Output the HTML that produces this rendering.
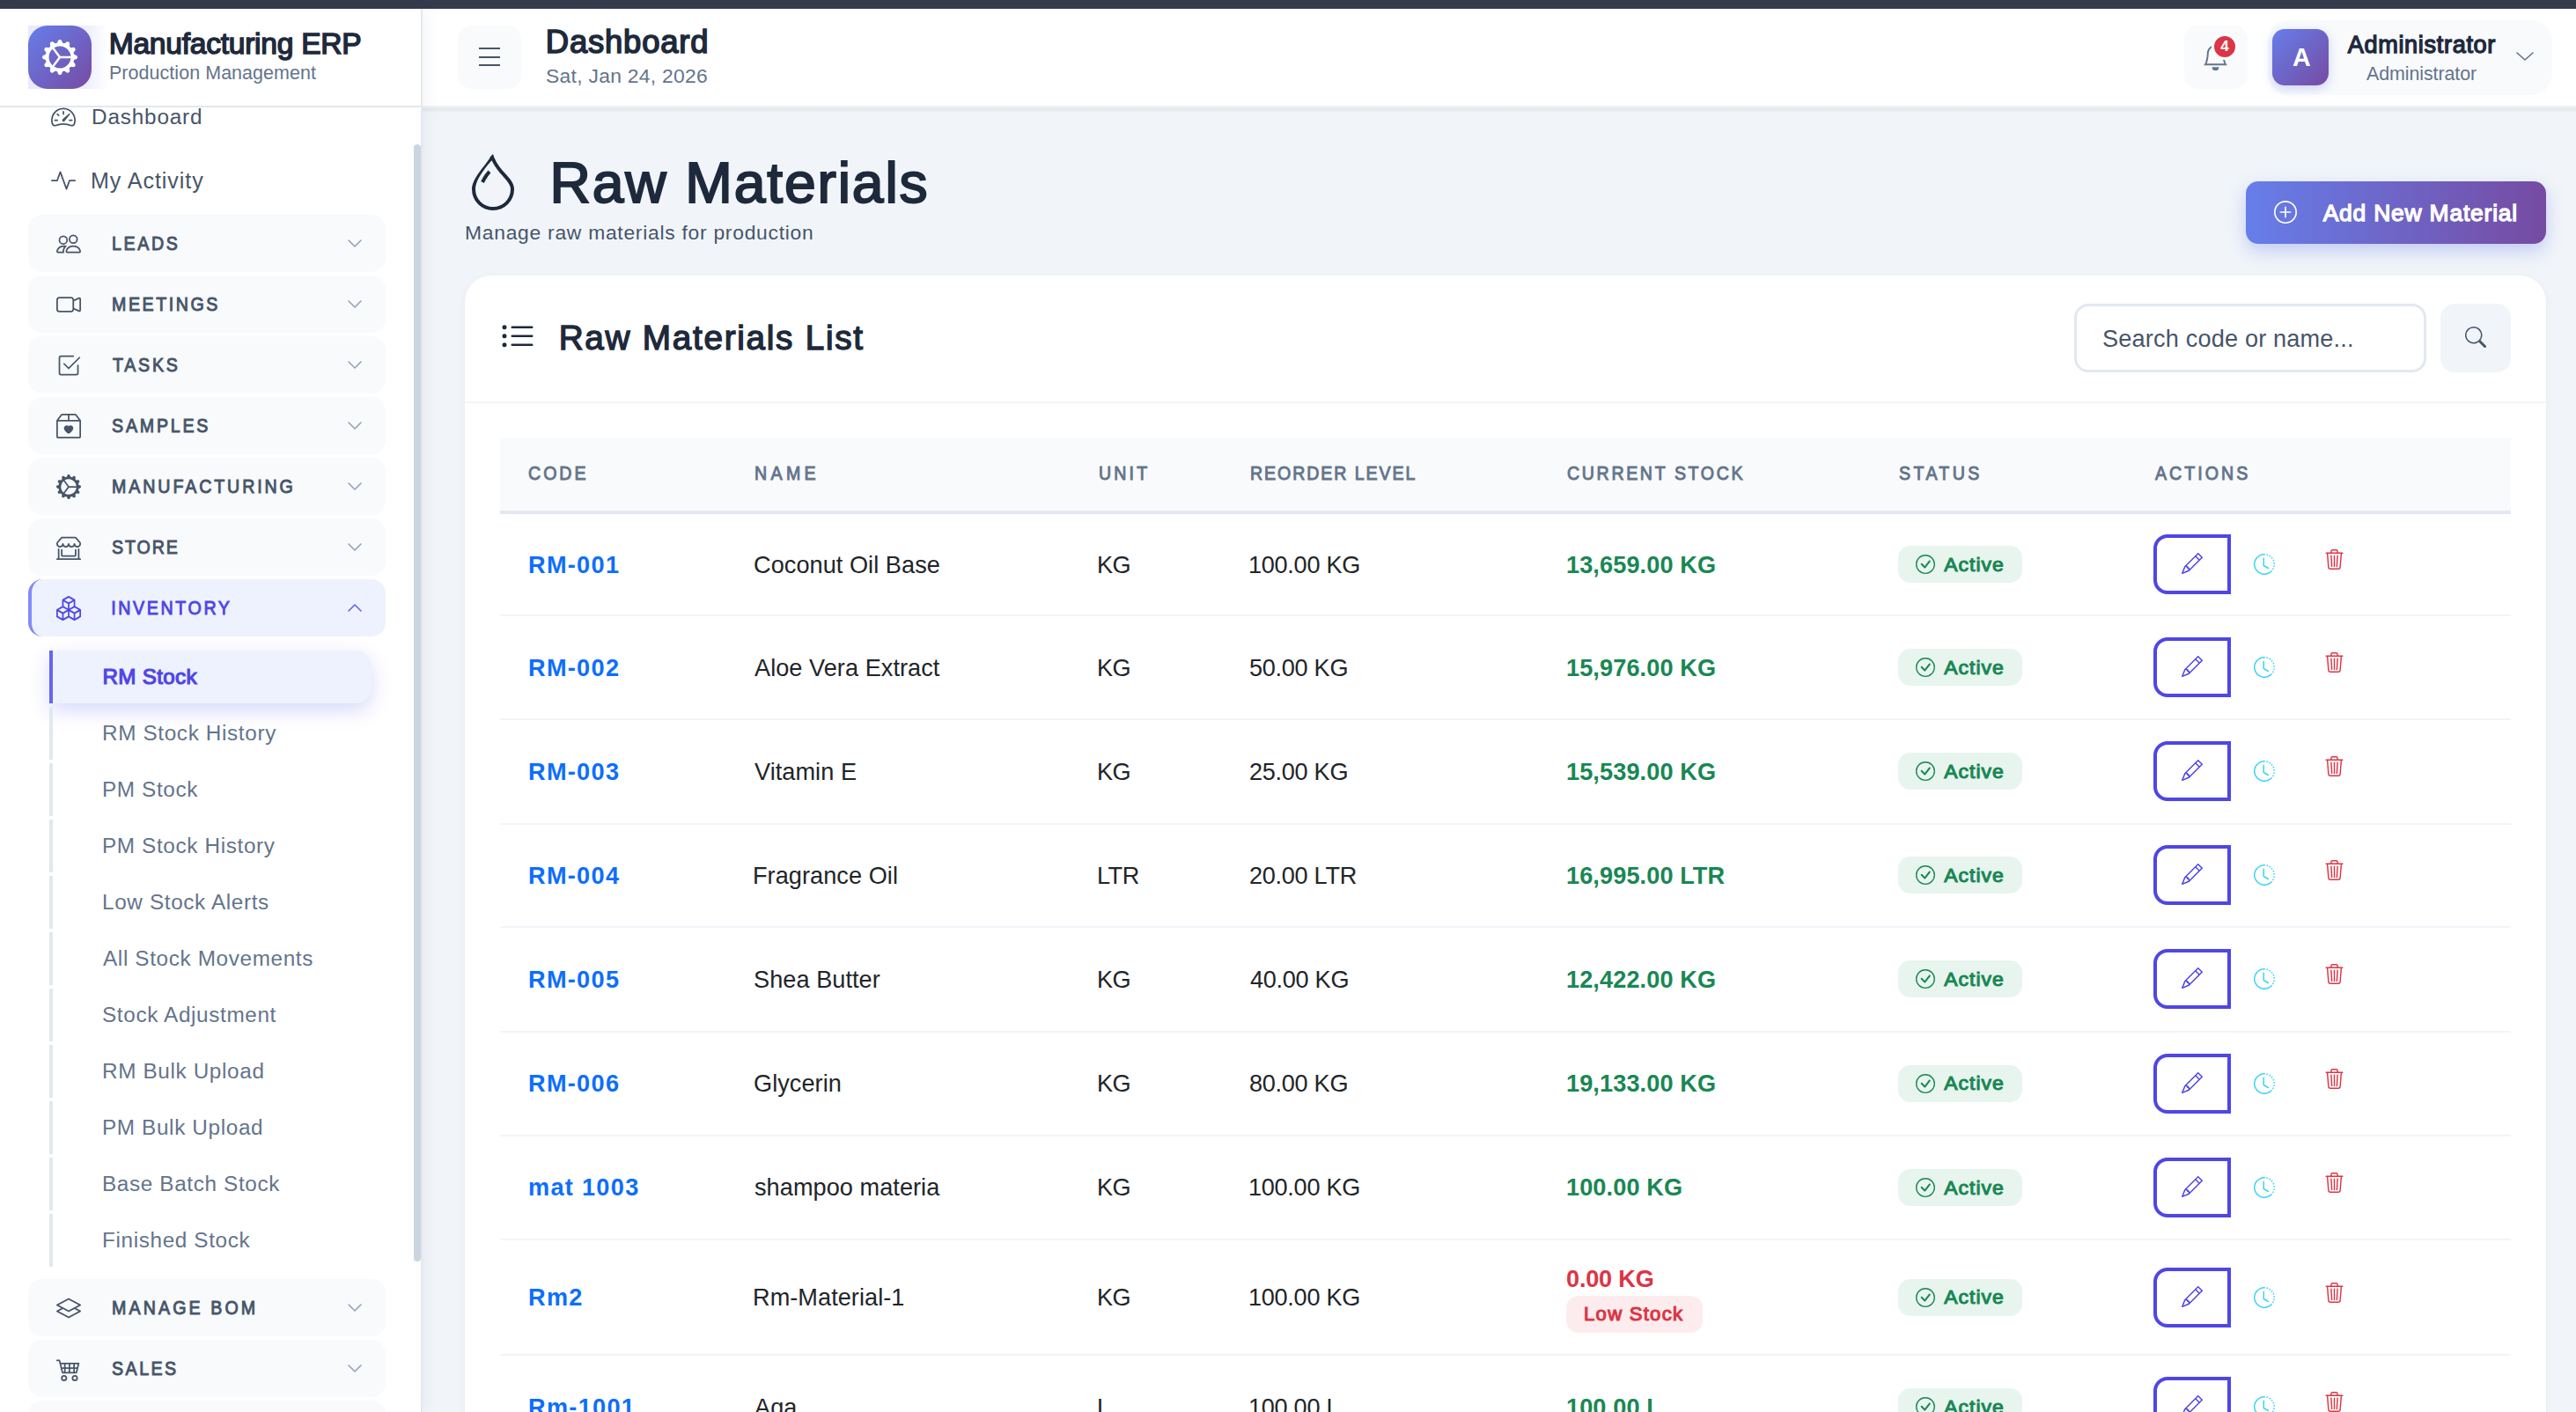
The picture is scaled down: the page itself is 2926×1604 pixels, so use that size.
<!DOCTYPE html>
<html><head><meta charset="utf-8"><title>Raw Materials</title>
<style>
html,body{margin:0;padding:0;width:2926px;height:1604px;overflow:hidden;background:#f1f5f9;font-family:"Liberation Sans",sans-serif}
.t{position:absolute;white-space:nowrap}
svg{display:block}
</style></head><body>
<div style="position:absolute;left:0;top:0;width:2926px;height:10px;background:#343b4d"></div>
<div style="position:absolute;left:480px;top:121px;width:2446px;height:1483px;background:#f1f5f9"></div>
<div style="position:absolute;left:480px;top:120px;width:2446px;height:9px;background:linear-gradient(#f1f5f9 0px,#eef1f5 2px,#e6eaf0 3px,#e6eaf0 5px,#eef1f5 7px,#f1f5f9 9px)"></div>
<div style="position:absolute;left:480px;top:10px;width:2446px;height:110px;background:#fff"></div>
<div style="position:absolute;left:0;top:10px;width:478px;height:1594px;background:#fff;border-right:2px solid #e2e8f0;box-shadow:3px 0 18px rgba(15,23,42,0.05)"></div>
<div style="position:absolute;left:0;top:120px;width:478px;height:2px;background:#e2e8f0"></div>
<div style="position:absolute;left:32px;top:29px;width:90px;height:72px;background:linear-gradient(90deg,rgba(120,130,235,0.16) 0%,rgba(120,130,235,0.13) 75%,rgba(120,130,235,0) 100%)"></div>
<div style="position:absolute;left:32px;top:29px;width:72px;height:72px;border-radius:22px;background:linear-gradient(135deg,#667eea 0%,#764ba2 100%)"></div>
<svg style="position:absolute;left:48px;top:45px;width:40px;height:40px;" viewBox="0 0 16 16" fill="#fff"><path d="M7.068.727c.243-.97 1.62-.97 1.864 0l.071.286a.96.96 0 0 0 1.622.434l.205-.211c.695-.719 1.888-.03 1.613.931l-.08.284a.96.96 0 0 0 1.187 1.187l.283-.081c.96-.275 1.65.918.931 1.613l-.211.205a.96.96 0 0 0 .434 1.622l.286.071c.97.243.97 1.62 0 1.864l-.286.071a.96.96 0 0 0-.434 1.622l.211.205c.719.695.03 1.888-.931 1.613l-.284-.08a.96.96 0 0 0-1.187 1.187l.081.283c.275.96-.918 1.65-1.613.931l-.205-.211a.96.96 0 0 0-1.622.434l-.071.286c-.243.97-1.62.97-1.864 0l-.071-.286a.96.96 0 0 0-1.622-.434l-.205.211c-.695.719-1.888.03-1.613-.931l.08-.284a.96.96 0 0 0-1.186-1.187l-.284.081c-.96.275-1.65-.918-.931-1.613l.211-.205a.96.96 0 0 0-.434-1.622l-.286-.071c-.97-.243-.97-1.62 0-1.864l.286-.071a.96.96 0 0 0 .434-1.622l-.211-.205c-.719-.695-.03-1.888.931-1.613l.284.08a.96.96 0 0 0 1.187-1.186l-.081-.284c-.275-.96.918-1.65 1.613-.931l.205.211a.96.96 0 0 0 1.622-.434zM12.973 8.5H8.25l-2.834 3.779A4.998 4.998 0 0 0 12.973 8.5m0-1a4.998 4.998 0 0 0-7.557-3.779l2.834 3.78zM5.048 3.967l-.087.065zm-.431.355A4.98 4.98 0 0 0 3.002 8c0 1.455.622 2.765 1.615 3.678L7.375 8zm.344 7.646.087.065z"/></svg>
<div class="t" style="left:123.75px;top:32.58px;font-size:33.57px;line-height:33.57px;letter-spacing:-0.258px;color:#1e293b;font-weight:400;-webkit-text-stroke:1.5px #1e293b;">Manufacturing ERP</div>
<div class="t" style="left:124.00px;top:72.86px;font-size:21.43px;line-height:21.43px;letter-spacing:0.077px;color:#64748b;font-weight:400;">Production Management</div>
<svg style="position:absolute;left:58px;top:119px;width:28px;height:28px;" viewBox="0 0 16 16" fill="#475569"><path d="M8 4a.5.5 0 0 1 .5.5V6a.5.5 0 0 1-1 0V4.5A.5.5 0 0 1 8 4M3.732 5.732a.5.5 0 0 1 .707 0l.915.914a.5.5 0 1 1-.708.708l-.914-.915a.5.5 0 0 1 0-.707M2 10a.5.5 0 0 1 .5-.5h1.586a.5.5 0 0 1 0 1H2.5A.5.5 0 0 1 2 10m9.5 0a.5.5 0 0 1 .5-.5h1.5a.5.5 0 0 1 0 1H12a.5.5 0 0 1-.5-.5m.754-4.246a.39.39 0 0 0-.527-.02L7.547 9.31a.91.91 0 1 0 1.302 1.258l3.434-4.297a.39.39 0 0 0-.029-.518z"/><path fill-rule="evenodd" d="M0 10a8 8 0 1 1 15.547 2.661c-.442 1.253-1.845 1.602-2.932 1.25C11.309 13.488 9.475 13 8 13c-1.474 0-3.31.488-4.615.911-1.087.352-2.49.003-2.932-1.25A8 8 0 0 1 0 10m8-7a7 7 0 0 0-6.603 9.329c.203.575.923.876 1.68.63C4.397 12.533 6.358 12 8 12s3.604.532 4.923.96c.757.245 1.477-.056 1.68-.631A7 7 0 0 0 8 3"/></svg>
<div class="t" style="left:104.00px;top:121.44px;font-size:24.29px;line-height:24.29px;letter-spacing:0.840px;color:#475569;font-weight:400;">Dashboard</div>
<svg style="position:absolute;left:58px;top:191px;width:28px;height:28px;" viewBox="0 0 16 16" fill="#475569"><path fill-rule="evenodd" d="M6 2a.5.5 0 0 1 .47.33L10 12.036l1.53-4.208A.5.5 0 0 1 12 7.5h3.5a.5.5 0 0 1 0 1h-3.15l-1.88 5.17a.5.5 0 0 1-.94 0L6 3.964 4.47 8.171A.5.5 0 0 1 4 8.5H.5a.5.5 0 0 1 0-1h3.15l1.88-5.17A.5.5 0 0 1 6 2"/></svg>
<div class="t" style="left:103.00px;top:192.84px;font-size:25.00px;line-height:25.00px;letter-spacing:0.965px;color:#475569;font-weight:400;">My Activity</div>
<div style="position:absolute;left:32px;top:244px;width:406px;height:65px;border-radius:16px;background:#f8fafc"></div>
<svg style="position:absolute;left:64px;top:262.5px;width:28px;height:28px;" viewBox="0 0 16 16" fill="#475569"><path d="M15 14s1 0 1-1-1-4-5-4-5 3-5 4 1 1 1 1zm-7.978-1L7 12.996c.001-.264.167-1.03.76-1.72C8.312 10.629 9.282 10 11 10c1.717 0 2.687.63 3.24 1.276.593.69.758 1.457.76 1.72l-.008.002-.014.002zM11 7a2 2 0 1 0 0-4 2 2 0 0 0 0 4m3-2a3 3 0 1 1-6 0 3 3 0 0 1 6 0M6.936 9.28a6 6 0 0 0-1.23-.247A7 7 0 0 0 5 9c-4 0-5 3-5 4q0 1 1 1h4.216A2.24 2.24 0 0 1 5 13c0-1.01.377-2.042 1.09-2.904.243-.294.526-.569.846-.816M4.92 10A5.5 5.5 0 0 0 4 13H1c0-.26.164-1.03.76-1.724.545-.636 1.492-1.256 3.16-1.275ZM1.5 5.5a3 3 0 1 1 6 0 3 3 0 0 1-6 0m3-2a2 2 0 1 0 0 4 2 2 0 0 0 0-4"/></svg>
<div class="t" style="left:126.50px;top:265.64px;font-size:22.29px;line-height:22.29px;letter-spacing:2.971px;color:#475569;font-weight:400;-webkit-text-stroke:1.0px #475569;transform:scaleX(0.88);transform-origin:0.50px 0;">LEADS</div>
<svg style="position:absolute;left:395px;top:271.5px;width:16px;height:9px;overflow:visible" viewBox="0 0 16 9"><path d="M1 1 L8.0 8 L15 1" fill="none" stroke="#94a3b8" stroke-width="1.6" stroke-linecap="round" stroke-linejoin="round"/></svg>
<div style="position:absolute;left:32px;top:313px;width:406px;height:65px;border-radius:16px;background:#f8fafc"></div>
<svg style="position:absolute;left:64px;top:331.5px;width:28px;height:28px;" viewBox="0 0 16 16" fill="#475569"><path fill-rule="evenodd" d="M0 5a2 2 0 0 1 2-2h7.5a2 2 0 0 1 1.983 1.738l3.11-1.382A1 1 0 0 1 16 4.269v7.462a1 1 0 0 1-1.406.913l-3.111-1.382A2 2 0 0 1 9.5 13H2a2 2 0 0 1-2-2zm11.5 5.175 3.5 1.556V4.269l-3.5 1.556zM2 4a1 1 0 0 0-1 1v6a1 1 0 0 0 1 1h7.5a1 1 0 0 0 1-1V5a1 1 0 0 0-1-1z"/></svg>
<div class="t" style="left:126.50px;top:334.64px;font-size:22.29px;line-height:22.29px;letter-spacing:2.915px;color:#475569;font-weight:400;-webkit-text-stroke:1.0px #475569;transform:scaleX(0.88);transform-origin:0.50px 0;">MEETINGS</div>
<svg style="position:absolute;left:395px;top:340.5px;width:16px;height:9px;overflow:visible" viewBox="0 0 16 9"><path d="M1 1 L8.0 8 L15 1" fill="none" stroke="#94a3b8" stroke-width="1.6" stroke-linecap="round" stroke-linejoin="round"/></svg>
<div style="position:absolute;left:32px;top:382px;width:406px;height:65px;border-radius:16px;background:#f8fafc"></div>
<svg style="position:absolute;left:64px;top:400.5px;width:28px;height:28px;" viewBox="0 0 16 16" fill="#475569"><path d="M3 14.5A1.5 1.5 0 0 1 1.5 13V3A1.5 1.5 0 0 1 3 1.5h8a.5.5 0 0 1 0 1H3a.5.5 0 0 0-.5.5v10a.5.5 0 0 0 .5.5h10a.5.5 0 0 0 .5-.5V8a.5.5 0 0 1 1 0v5a1.5 1.5 0 0 1-1.5 1.5z"/><path d="m8.354 10.354 7-7a.5.5 0 0 0-.708-.708L8 9.293 5.354 6.646a.5.5 0 1 0-.708.708l3 3a.5.5 0 0 0 .708 0"/></svg>
<div class="t" style="left:127.50px;top:403.64px;font-size:22.29px;line-height:22.29px;letter-spacing:3.138px;color:#475569;font-weight:400;-webkit-text-stroke:1.0px #475569;transform:scaleX(0.88);transform-origin:-0.50px 0;">TASKS</div>
<svg style="position:absolute;left:395px;top:409.5px;width:16px;height:9px;overflow:visible" viewBox="0 0 16 9"><path d="M1 1 L8.0 8 L15 1" fill="none" stroke="#94a3b8" stroke-width="1.6" stroke-linecap="round" stroke-linejoin="round"/></svg>
<div style="position:absolute;left:32px;top:451px;width:406px;height:65px;border-radius:16px;background:#f8fafc"></div>
<svg style="position:absolute;left:64px;top:469.5px;width:28px;height:28px;" viewBox="0 0 16 16" fill="#475569"><path d="M8 7.982C9.664 6.309 13.825 9.236 8 13 2.175 9.236 6.336 6.31 8 7.982"/><path d="M3.75 0a1 1 0 0 0-.8.4L.1 4.2a.5.5 0 0 0-.1.3V15a1 1 0 0 0 1 1h14a1 1 0 0 0 1-1V4.5a.5.5 0 0 0-.1-.3L13.05.4a1 1 0 0 0-.8-.4zm0 1H7.5v3h-6zM8.5 4V1h3.75l2.25 3zM15 5v10H1V5z"/></svg>
<div class="t" style="left:126.50px;top:472.64px;font-size:22.29px;line-height:22.29px;letter-spacing:3.169px;color:#475569;font-weight:400;-webkit-text-stroke:1.0px #475569;transform:scaleX(0.88);transform-origin:0.50px 0;">SAMPLES</div>
<svg style="position:absolute;left:395px;top:478.5px;width:16px;height:9px;overflow:visible" viewBox="0 0 16 9"><path d="M1 1 L8.0 8 L15 1" fill="none" stroke="#94a3b8" stroke-width="1.6" stroke-linecap="round" stroke-linejoin="round"/></svg>
<div style="position:absolute;left:32px;top:520px;width:406px;height:65px;border-radius:16px;background:#f8fafc"></div>
<svg style="position:absolute;left:64px;top:538.5px;width:28px;height:28px;" viewBox="0 0 16 16" fill="#475569"><path d="M7.068.727c.243-.97 1.62-.97 1.864 0l.071.286a.96.96 0 0 0 1.622.434l.205-.211c.695-.719 1.888-.03 1.613.931l-.08.284a.96.96 0 0 0 1.187 1.187l.283-.081c.96-.275 1.65.918.931 1.613l-.211.205a.96.96 0 0 0 .434 1.622l.286.071c.97.243.97 1.62 0 1.864l-.286.071a.96.96 0 0 0-.434 1.622l.211.205c.719.695.03 1.888-.931 1.613l-.284-.08a.96.96 0 0 0-1.187 1.187l.081.283c.275.96-.918 1.65-1.613.931l-.205-.211a.96.96 0 0 0-1.622.434l-.071.286c-.243.97-1.62.97-1.864 0l-.071-.286a.96.96 0 0 0-1.622-.434l-.205.211c-.695.719-1.888.03-1.613-.931l.08-.284a.96.96 0 0 0-1.186-1.187l-.284.081c-.96.275-1.65-.918-.931-1.613l.211-.205a.96.96 0 0 0-.434-1.622l-.286-.071c-.97-.243-.97-1.62 0-1.864l.286-.071a.96.96 0 0 0 .434-1.622l-.211-.205c-.719-.695-.03-1.888.931-1.613l.284.08a.96.96 0 0 0 1.187-1.186l-.081-.284c-.275-.96.918-1.65 1.613-.931l.205.211a.96.96 0 0 0 1.622-.434zM12.973 8.5H8.25l-2.834 3.779A4.998 4.998 0 0 0 12.973 8.5m0-1a4.998 4.998 0 0 0-7.557-3.779l2.834 3.78zM5.048 3.967l-.087.065zm-.431.355A4.98 4.98 0 0 0 3.002 8c0 1.455.622 2.765 1.615 3.678L7.375 8zm.344 7.646.087.065z"/></svg>
<div class="t" style="left:126.50px;top:541.64px;font-size:22.29px;line-height:22.29px;letter-spacing:3.291px;color:#475569;font-weight:400;-webkit-text-stroke:1.0px #475569;transform:scaleX(0.88);transform-origin:0.50px 0;">MANUFACTURING</div>
<svg style="position:absolute;left:395px;top:547.5px;width:16px;height:9px;overflow:visible" viewBox="0 0 16 9"><path d="M1 1 L8.0 8 L15 1" fill="none" stroke="#94a3b8" stroke-width="1.6" stroke-linecap="round" stroke-linejoin="round"/></svg>
<div style="position:absolute;left:32px;top:589px;width:406px;height:65px;border-radius:16px;background:#f8fafc"></div>
<svg style="position:absolute;left:64px;top:607.5px;width:28px;height:28px;" viewBox="0 0 16 16" fill="#475569"><path d="M2.97 1.35A1 1 0 0 1 3.73 1h8.54a1 1 0 0 1 .76.35l2.609 3.044A1.5 1.5 0 0 1 16 5.37v.255a2.375 2.375 0 0 1-4.25 1.458A2.37 2.37 0 0 1 9.875 8 2.37 2.37 0 0 1 8 7.083 2.37 2.37 0 0 1 6.125 8a2.37 2.37 0 0 1-1.875-.917A2.375 2.375 0 0 1 0 5.625V5.37a1.5 1.5 0 0 1 .361-.976zm1.78 4.275a1.375 1.375 0 0 0 2.75 0 .5.5 0 0 1 1 0 1.375 1.375 0 0 0 2.75 0 .5.5 0 0 1 1 0 1.375 1.375 0 1 0 2.75 0V5.37a.5.5 0 0 0-.12-.325L12.27 2H3.73L1.12 5.045A.5.5 0 0 0 1 5.37v.255a1.375 1.375 0 0 0 2.75 0 .5.5 0 0 1 1 0M1.5 8.5A.5.5 0 0 1 2 9v6h12V9a.5.5 0 0 1 1 0v6h.5a.5.5 0 0 1 0 1H.5a.5.5 0 0 1 0-1H1V9a.5.5 0 0 1 .5-.5m2 .5a.5.5 0 0 1 .5.5V13h8V9.5a.5.5 0 0 1 1 0V13a1 1 0 0 1-1 1H4a1 1 0 0 1-1-1V9.5a.5.5 0 0 1 .5-.5"/></svg>
<div class="t" style="left:126.50px;top:610.64px;font-size:22.29px;line-height:22.29px;letter-spacing:2.150px;color:#475569;font-weight:400;-webkit-text-stroke:1.0px #475569;transform:scaleX(0.88);transform-origin:0.50px 0;">STORE</div>
<svg style="position:absolute;left:395px;top:616.5px;width:16px;height:9px;overflow:visible" viewBox="0 0 16 9"><path d="M1 1 L8.0 8 L15 1" fill="none" stroke="#94a3b8" stroke-width="1.6" stroke-linecap="round" stroke-linejoin="round"/></svg>
<div style="position:absolute;left:32px;top:658px;width:402px;height:65px;border-radius:16px;background:#eef2ff;border-left:4px solid #818cf8"></div>
<svg style="position:absolute;left:64px;top:676.5px;width:28px;height:28px;" viewBox="0 0 16 16" fill="#4f46e5"><path d="M7.752.066a.5.5 0 0 1 .496 0l3.75 2.143a.5.5 0 0 1 .252.434v3.995l3.498 2A.5.5 0 0 1 16 9.07v4.286a.5.5 0 0 1-.252.434l-3.75 2.143a.5.5 0 0 1-.496 0l-3.502-2-3.502 2.001a.5.5 0 0 1-.496 0l-3.75-2.143A.5.5 0 0 1 0 13.357V9.071a.5.5 0 0 1 .252-.434L3.75 6.638V2.643a.5.5 0 0 1 .252-.434zM4.25 7.504 1.508 9.071l2.742 1.567 2.742-1.567zM7.5 9.933l-2.75 1.571v3.134l2.75-1.571zm1 3.134 2.75 1.571v-3.134L8.5 9.933zm.508-3.996 2.742 1.567 2.742-1.567-2.742-1.567zm2.242-2.433V3.504L8.5 5.076V8.21zM7.5 8.21V5.076L4.75 3.504v3.134zM5.258 2.643 8 4.21l2.742-1.567L8 1.076zM15 9.933l-2.75 1.571v3.134L15 13.067zM3.75 14.638v-3.134L1 9.933v3.134z"/></svg>
<div class="t" style="left:125.50px;top:679.64px;font-size:22.29px;line-height:22.29px;letter-spacing:2.994px;color:#4f46e5;font-weight:400;-webkit-text-stroke:1.0px #4f46e5;transform:scaleX(0.88);transform-origin:1.50px 0;">INVENTORY</div>
<svg style="position:absolute;left:395px;top:685.5px;width:16px;height:9px;overflow:visible" viewBox="0 0 16 9"><path d="M1 8 L8.0 1 L15 8" fill="none" stroke="#6366f1" stroke-width="1.6" stroke-linecap="round" stroke-linejoin="round"/></svg>
<div style="position:absolute;left:56px;top:739.00px;width:362px;height:60px;border-left:4px solid #6366f1;border-radius:0 18px 18px 0;background:#eef2ff;box-shadow:0 8px 22px rgba(99,102,241,0.25)"></div>
<div class="t" style="left:116.60px;top:757.26px;font-size:24.14px;line-height:24.14px;letter-spacing:0.329px;color:#4f46e5;font-weight:400;-webkit-text-stroke:1.2px #4f46e5;">RM Stock</div>
<div style="position:absolute;left:56px;top:803.04px;width:4px;height:60px;background:#e2e8f0"></div>
<div class="t" style="left:116.00px;top:820.98px;font-size:24.29px;line-height:24.29px;letter-spacing:0.650px;color:#64748b;font-weight:400;">RM Stock History</div>
<div style="position:absolute;left:56px;top:867.08px;width:4px;height:60px;background:#e2e8f0"></div>
<div class="t" style="left:116.00px;top:885.02px;font-size:24.29px;line-height:24.29px;letter-spacing:0.650px;color:#64748b;font-weight:400;">PM Stock</div>
<div style="position:absolute;left:56px;top:931.12px;width:4px;height:60px;background:#e2e8f0"></div>
<div class="t" style="left:116.00px;top:949.06px;font-size:24.29px;line-height:24.29px;letter-spacing:0.650px;color:#64748b;font-weight:400;">PM Stock History</div>
<div style="position:absolute;left:56px;top:995.16px;width:4px;height:60px;background:#e2e8f0"></div>
<div class="t" style="left:116.00px;top:1013.10px;font-size:24.29px;line-height:24.29px;letter-spacing:0.650px;color:#64748b;font-weight:400;">Low Stock Alerts</div>
<div style="position:absolute;left:56px;top:1059.20px;width:4px;height:60px;background:#e2e8f0"></div>
<div class="t" style="left:117.00px;top:1077.14px;font-size:24.29px;line-height:24.29px;letter-spacing:0.650px;color:#64748b;font-weight:400;">All Stock Movements</div>
<div style="position:absolute;left:56px;top:1123.24px;width:4px;height:60px;background:#e2e8f0"></div>
<div class="t" style="left:116.00px;top:1141.18px;font-size:24.29px;line-height:24.29px;letter-spacing:0.650px;color:#64748b;font-weight:400;">Stock Adjustment</div>
<div style="position:absolute;left:56px;top:1187.28px;width:4px;height:60px;background:#e2e8f0"></div>
<div class="t" style="left:116.00px;top:1205.22px;font-size:24.29px;line-height:24.29px;letter-spacing:0.650px;color:#64748b;font-weight:400;">RM Bulk Upload</div>
<div style="position:absolute;left:56px;top:1251.32px;width:4px;height:60px;background:#e2e8f0"></div>
<div class="t" style="left:116.00px;top:1269.26px;font-size:24.29px;line-height:24.29px;letter-spacing:0.650px;color:#64748b;font-weight:400;">PM Bulk Upload</div>
<div style="position:absolute;left:56px;top:1315.36px;width:4px;height:60px;background:#e2e8f0"></div>
<div class="t" style="left:116.00px;top:1333.30px;font-size:24.29px;line-height:24.29px;letter-spacing:0.650px;color:#64748b;font-weight:400;">Base Batch Stock</div>
<div style="position:absolute;left:56px;top:1379.40px;width:4px;height:60px;background:#e2e8f0"></div>
<div class="t" style="left:116.00px;top:1397.34px;font-size:24.29px;line-height:24.29px;letter-spacing:0.650px;color:#64748b;font-weight:400;">Finished Stock</div>
<div style="position:absolute;left:32px;top:1453px;width:406px;height:65px;border-radius:16px;background:#f8fafc"></div>
<svg style="position:absolute;left:64px;top:1471.5px;width:28px;height:28px;" viewBox="0 0 16 16" fill="#475569"><path d="M8.235 1.559a.5.5 0 0 0-.47 0l-7.5 4a.5.5 0 0 0 0 .882L3.188 8 .264 9.559a.5.5 0 0 0 0 .882l7.5 4a.5.5 0 0 0 .47 0l7.5-4a.5.5 0 0 0 0-.882L12.813 8l2.922-1.559a.5.5 0 0 0 0-.882zm3.515 7.008L14.438 10 8 13.433 1.562 10 4.25 8.567l3.515 1.874a.5.5 0 0 0 .47 0zM8 9.433 1.562 6 8 2.567 14.438 6z"/></svg>
<div class="t" style="left:126.50px;top:1474.64px;font-size:22.29px;line-height:22.29px;letter-spacing:3.533px;color:#475569;font-weight:400;-webkit-text-stroke:1.0px #475569;transform:scaleX(0.88);transform-origin:0.50px 0;">MANAGE BOM</div>
<svg style="position:absolute;left:395px;top:1480.5px;width:16px;height:9px;overflow:visible" viewBox="0 0 16 9"><path d="M1 1 L8.0 8 L15 1" fill="none" stroke="#94a3b8" stroke-width="1.6" stroke-linecap="round" stroke-linejoin="round"/></svg>
<div style="position:absolute;left:32px;top:1522px;width:406px;height:65px;border-radius:16px;background:#f8fafc"></div>
<svg style="position:absolute;left:64px;top:1540.5px;width:28px;height:28px;" viewBox="0 0 16 16" fill="#475569"><path d="M0 2.5A.5.5 0 0 1 .5 2H2a.5.5 0 0 1 .485.379L2.89 4H14.5a.5.5 0 0 1 .485.621l-1.5 6A.5.5 0 0 1 13 11H4a.5.5 0 0 1-.485-.379L1.61 3H.5a.5.5 0 0 1-.5-.5M3.14 5l.5 2H5V5zM6 5v2h2V5zm3 0v2h2V5zm3 0v2h1.36l.5-2zm1.11 3H12v2h.61zM11 8H9v2h2zM8 8H6v2h2zM5 8H3.89l.5 2H5zm0 5a1 1 0 1 0 0 2 1 1 0 0 0 0-2m-2 1a2 2 0 1 1 4 0 2 2 0 0 1-4 0m9-1a1 1 0 1 0 0 2 1 1 0 0 0 0-2m-2 1a2 2 0 1 1 4 0 2 2 0 0 1-4 0"/></svg>
<div class="t" style="left:126.50px;top:1543.64px;font-size:22.29px;line-height:22.29px;letter-spacing:2.796px;color:#475569;font-weight:400;-webkit-text-stroke:1.0px #475569;transform:scaleX(0.88);transform-origin:0.50px 0;">SALES</div>
<svg style="position:absolute;left:395px;top:1549.5px;width:16px;height:9px;overflow:visible" viewBox="0 0 16 9"><path d="M1 1 L8.0 8 L15 1" fill="none" stroke="#94a3b8" stroke-width="1.6" stroke-linecap="round" stroke-linejoin="round"/></svg>
<div style="position:absolute;left:32px;top:1591px;width:406px;height:65px;border-radius:16px;background:#f8fafc"></div>
<div style="position:absolute;left:470px;top:164px;width:8px;height:1269px;border-radius:4px;background:#cbd5e1"></div>
<div style="position:absolute;left:520px;top:29px;width:72px;height:72px;border-radius:16px;background:#f8fafc"></div>
<div style="position:absolute;left:544px;top:54px;width:24px;height:2px;background:#475569"></div>
<div style="position:absolute;left:544px;top:64px;width:24px;height:2px;background:#475569"></div>
<div style="position:absolute;left:544px;top:73px;width:24px;height:2px;background:#475569"></div>
<div class="t" style="left:619.80px;top:30.16px;font-size:36.43px;line-height:36.43px;letter-spacing:0.810px;color:#1e293b;font-weight:400;-webkit-text-stroke:1.6px #1e293b;">Dashboard</div>
<div class="t" style="left:620.00px;top:74.65px;font-size:22.86px;line-height:22.86px;letter-spacing:0.282px;color:#64748b;font-weight:400;">Sat, Jan 24, 2026</div>
<div style="position:absolute;left:2481px;top:29px;width:72px;height:72px;border-radius:16px;background:#f8fafc"></div>
<svg style="position:absolute;left:2501px;top:49px;width:31px;height:31px;" viewBox="0 0 16 16" fill="#64748b"><path d="M8 16a2 2 0 0 0 2-2H6a2 2 0 0 0 2 2M8 1.918l-.797.161A4 4 0 0 0 4 6c0 .628-.134 2.197-.459 3.742-.16.767-.376 1.566-.663 2.258h10.244c-.287-.692-.502-1.49-.663-2.258C12.134 8.197 12 6.628 12 6a4 4 0 0 0-3.203-3.92zM14.22 12c.223.447.481.801.78 1H1c.299-.199.557-.553.78-1C2.68 10.2 3 6.88 3 6c0-2.42 1.72-4.44 4.005-4.901a1 1 0 1 1 1.99 0A5 5 0 0 1 13 6c0 .88.32 4.2 1.22 6"/></svg>
<div style="position:absolute;left:2512px;top:38px;width:24px;height:24px;border-radius:50%;background:#dc3545;border:3px solid #fff;color:#fff;font-weight:700;font-size:17px;line-height:24px;text-align:center">4</div>
<div style="position:absolute;left:2576px;top:23px;width:323px;height:85px;border-radius:24px;background:#f8fafc"></div>
<div style="position:absolute;left:2581px;top:33px;width:64px;height:64px;border-radius:14px;background:linear-gradient(135deg,#667eea 0%,#764ba2 100%);box-shadow:0 4px 12px rgba(102,126,234,0.3)"></div>
<div class="t" style="left:2604.00px;top:50.81px;font-size:28.57px;line-height:28.57px;letter-spacing:0.000px;color:#fff;font-weight:700;">A</div>
<div class="t" style="left:2666.65px;top:37.02px;font-size:27.14px;line-height:27.14px;letter-spacing:0.662px;color:#1e293b;font-weight:400;-webkit-text-stroke:1.3px #1e293b;">Administrator</div>
<div class="t" style="left:2688.00px;top:73.86px;font-size:21.43px;line-height:21.43px;letter-spacing:-0.088px;color:#64748b;font-weight:400;">Administrator</div>
<svg style="position:absolute;left:2858px;top:59px;width:20px;height:10px;overflow:visible" viewBox="0 0 20 10"><path d="M1 1 L10.0 9 L19 1" fill="none" stroke="#64748b" stroke-width="1.6" stroke-linecap="round" stroke-linejoin="round"/></svg>
<svg style="position:absolute;left:528px;top:175px;width:64px;height:64px;" viewBox="0 0 16 16" fill="#1e293b"><path fill-rule="evenodd" d="M7.21.8C7.69.295 8 0 8 0q.164.544.371 1.038c.812 1.946 2.073 3.35 3.197 4.6C12.878 7.096 14 8.345 14 10a6 6 0 0 1-12 0C2 6.668 6.58 2.517 7.21.8m.413 1.021A31 31 0 0 0 5.794 3.99c-.726.95-1.436 1.986-1.96 3.006C3.304 8.048 3 9.026 3 10a5 5 0 0 0 10 0c0-1.201-.796-2.157-2.181-3.7l-.03-.032C9.75 5.11 8.5 3.72 7.623 1.82z"/><path fill-rule="evenodd" d="M4.553 7.776c.82-1.641 1.717-2.753 2.093-3.13l.708.708c-.29.29-1.128 1.311-1.907 2.87z"/></svg>
<div class="t" style="left:624.50px;top:176.08px;font-size:64.29px;line-height:64.29px;letter-spacing:1.827px;color:#1e293b;font-weight:400;-webkit-text-stroke:2px #1e293b;">Raw Materials</div>
<div class="t" style="left:528.00px;top:252.65px;font-size:22.86px;line-height:22.86px;letter-spacing:0.727px;color:#475569;font-weight:400;">Manage raw materials for production</div>
<div style="position:absolute;left:2551px;top:206px;width:341px;height:71px;border-radius:14px;background:linear-gradient(90deg,#667eea 0%,#764ba2 100%);box-shadow:0 8px 20px rgba(102,126,234,0.35)"></div>
<svg style="position:absolute;left:2583px;top:228px;width:26px;height:26px;" viewBox="0 0 16 16" fill="#fff"><path d="M8 15A7 7 0 1 1 8 1a7 7 0 0 1 0 14m0 1A8 8 0 1 0 8 0a8 8 0 0 0 0 16"/><path d="M8 4a.5.5 0 0 1 .5.5v3h3a.5.5 0 0 1 0 1h-3v3a.5.5 0 0 1-1 0v-3h-3a.5.5 0 0 1 0-1h3v-3A.5.5 0 0 1 8 4"/></svg>
<div class="t" style="left:2638.65px;top:228.63px;font-size:26.43px;line-height:26.43px;letter-spacing:0.803px;color:#fff;font-weight:400;-webkit-text-stroke:1.3px #fff;">Add New Material</div>
<div style="position:absolute;left:528px;top:313px;width:2364px;height:1400px;border-radius:30px;background:#fff;box-shadow:0 2px 10px rgba(15,23,42,0.05)"></div>
<svg style="position:absolute;left:568.3px;top:363px;width:40px;height:40px;" viewBox="0 0 16 16" fill="#1e293b"><path d="M5 11.5a.5.5 0 0 1 .5-.5h9a.5.5 0 0 1 0 1h-9a.5.5 0 0 1-.5-.5m0-4a.5.5 0 0 1 .5-.5h9a.5.5 0 0 1 0 1h-9a.5.5 0 0 1-.5-.5m0-4a.5.5 0 0 1 .5-.5h9a.5.5 0 0 1 0 1h-9a.5.5 0 0 1-.5-.5m-3 1a1 1 0 1 0 0-2 1 1 0 0 0 0 2m0 4a1 1 0 1 0 0-2 1 1 0 0 0 0 2m0 4a1 1 0 1 0 0-2 1 1 0 0 0 0 2"/></svg>
<div class="t" style="left:634.70px;top:364.53px;font-size:38.71px;line-height:38.71px;letter-spacing:1.717px;color:#1e293b;font-weight:400;-webkit-text-stroke:1.4px #1e293b;">Raw Materials List</div>
<div style="position:absolute;left:2356px;top:345px;width:394px;height:72px;border-radius:16px;border:3px solid #e2e8f0;background:#fff"></div>
<div class="t" style="left:2388.00px;top:371.02px;font-size:27.14px;line-height:27.14px;letter-spacing:0.171px;color:#475569;font-weight:400;">Search code or name...</div>
<div style="position:absolute;left:2772px;top:345px;width:80px;height:78px;border-radius:16px;background:#f1f5f9"></div>
<svg style="position:absolute;left:2800px;top:371px;width:24px;height:24px;" viewBox="0 0 16 16" fill="#475569"><path d="M11.742 10.344a6.5 6.5 0 1 0-1.397 1.398h-.001q.044.06.098.115l3.85 3.85a1 1 0 0 0 1.415-1.414l-3.85-3.85a1 1 0 0 0-.115-.1zM12 6.5a5.5 5.5 0 1 1-11 0 5.5 5.5 0 0 1 11 0"/></svg>
<div style="position:absolute;left:528px;top:456px;width:2364px;height:2px;background:#f1f5f9"></div>
<div style="position:absolute;left:568px;top:498px;width:2284px;height:82px;background:#f8fafc;border-bottom:4px solid #e2e8f0"></div>
<div class="t" style="left:600.10px;top:527.14px;font-size:22.29px;line-height:22.29px;letter-spacing:3.337px;color:#64748b;font-weight:400;-webkit-text-stroke:1.0px #64748b;transform:scaleX(0.88);transform-origin:0.50px 0;">CODE</div>
<div class="t" style="left:856.90px;top:527.14px;font-size:22.29px;line-height:22.29px;letter-spacing:4.890px;color:#64748b;font-weight:400;-webkit-text-stroke:1.0px #64748b;transform:scaleX(0.88);transform-origin:0.50px 0;">NAME</div>
<div class="t" style="left:1247.50px;top:527.14px;font-size:22.29px;line-height:22.29px;letter-spacing:3.527px;color:#64748b;font-weight:400;-webkit-text-stroke:1.0px #64748b;transform:scaleX(0.88);transform-origin:0.50px 0;">UNIT</div>
<div class="t" style="left:1420.30px;top:527.14px;font-size:22.29px;line-height:22.29px;letter-spacing:2.160px;color:#64748b;font-weight:400;-webkit-text-stroke:1.0px #64748b;transform:scaleX(0.88);transform-origin:0.50px 0;">REORDER LEVEL</div>
<div class="t" style="left:1779.50px;top:527.14px;font-size:22.29px;line-height:22.29px;letter-spacing:2.972px;color:#64748b;font-weight:400;-webkit-text-stroke:1.0px #64748b;transform:scaleX(0.88);transform-origin:0.50px 0;">CURRENT STOCK</div>
<div class="t" style="left:2156.50px;top:527.14px;font-size:22.29px;line-height:22.29px;letter-spacing:3.823px;color:#64748b;font-weight:400;-webkit-text-stroke:1.0px #64748b;transform:scaleX(0.88);transform-origin:0.50px 0;">STATUS</div>
<div class="t" style="left:2447.50px;top:527.14px;font-size:22.29px;line-height:22.29px;letter-spacing:3.452px;color:#64748b;font-weight:400;-webkit-text-stroke:1.0px #64748b;transform:scaleX(0.88);transform-origin:-0.50px 0;">ACTIONS</div>
<div style="position:absolute;left:568px;top:698.0px;width:2284px;height:2px;background:#f1f5f9"></div>
<div style="position:absolute;left:568px;top:816.3px;width:2284px;height:2px;background:#f1f5f9"></div>
<div style="position:absolute;left:568px;top:934.5px;width:2284px;height:2px;background:#f1f5f9"></div>
<div style="position:absolute;left:568px;top:1052.0px;width:2284px;height:2px;background:#f1f5f9"></div>
<div style="position:absolute;left:568px;top:1170.8px;width:2284px;height:2px;background:#f1f5f9"></div>
<div style="position:absolute;left:568px;top:1288.5px;width:2284px;height:2px;background:#f1f5f9"></div>
<div style="position:absolute;left:568px;top:1407.0px;width:2284px;height:2px;background:#f1f5f9"></div>
<div style="position:absolute;left:568px;top:1538.0px;width:2284px;height:2px;background:#f1f5f9"></div>
<div class="t" style="left:600.00px;top:627.52px;font-size:27.14px;line-height:27.14px;letter-spacing:1.300px;color:#0d6efd;font-weight:700;">RM-001</div>
<div class="t" style="left:856.00px;top:627.52px;font-size:27.14px;line-height:27.14px;letter-spacing:0.050px;color:#212529;font-weight:400;">Coconut Oil Base</div>
<div class="t" style="left:1246.00px;top:627.52px;font-size:27.14px;line-height:27.14px;letter-spacing:-0.500px;color:#212529;font-weight:400;">KG</div>
<div class="t" style="left:1418.00px;top:627.52px;font-size:27.14px;line-height:27.14px;letter-spacing:-0.300px;color:#212529;font-weight:400;">100.00 KG</div>
<div class="t" style="left:1779.00px;top:627.52px;font-size:27.14px;line-height:27.14px;letter-spacing:0.100px;color:#198754;font-weight:700;">13,659.00 KG</div>
<div style="position:absolute;left:2156px;top:620.0px;width:141px;height:42px;border-radius:14px;background:#e8f5ef"></div>
<svg style="position:absolute;left:2176px;top:630px;width:22px;height:22px;" viewBox="0 0 16 16" fill="#198754"><path d="M8 15A7 7 0 1 1 8 1a7 7 0 0 1 0 14m0 1A8 8 0 1 0 8 0a8 8 0 0 0 0 16"/><path d="m10.97 4.97-.02.022-3.473 4.425-2.093-2.094a.75.75 0 0 0-1.06 1.06L6.97 11.03a.75.75 0 0 0 1.079-.02l3.992-4.99a.75.75 0 0 0-1.071-1.05"/></svg>
<div class="t" style="left:2208.15px;top:629.84px;font-size:22.93px;line-height:22.93px;letter-spacing:1.046px;color:#198754;font-weight:400;-webkit-text-stroke:1.1px #198754;">Active</div>
<div style="position:absolute;left:2446px;top:607.0px;width:80px;height:60px;border:4px solid #4f46e5;border-radius:16px 0 0 16px"></div>
<svg style="position:absolute;left:2478px;top:628px;width:24px;height:24px;" viewBox="0 0 16 16" fill="#4f46e5"><path d="M12.146.146a.5.5 0 0 1 .708 0l3 3a.5.5 0 0 1 0 .708l-10 10a.5.5 0 0 1-.168.11l-5 2a.5.5 0 0 1-.65-.65l2-5a.5.5 0 0 1 .11-.168zM11.207 2.5 13.5 4.793 14.793 3.5 12.5 1.207zm1.586 3L10.5 3.207 4 9.707V10h.5a.5.5 0 0 1 .5.5v.5h.5a.5.5 0 0 1 .5.5v.5h.293zm-9.761 5.175-.106.106-1.528 3.821 3.821-1.528.106-.106A.5.5 0 0 1 5 12.5V12h-.5a.5.5 0 0 1-.5-.5V11h-.5a.5.5 0 0 1-.468-.325"/></svg>
<svg style="position:absolute;left:2560px;top:629px;width:24px;height:24px;opacity:0.8;" viewBox="0 0 16 16" fill="#0dcaf0"><path d="M8.515 1.019A7 7 0 0 0 8 1V0a8 8 0 0 1 .589.022zm2.004.45a7 7 0 0 0-.985-.299l.219-.976q.576.129 1.126.342zm1.37.71a7 7 0 0 0-.439-.27l.493-.87a8 8 0 0 1 .979.654l-.615.789a7 7 0 0 0-.418-.302zm1.834 1.79a7 7 0 0 0-.653-.796l.724-.69q.406.429.747.91zm.744 1.352a7 7 0 0 0-.214-.468l.893-.45a8 8 0 0 1 .45 1.088l-.95.313a7 7 0 0 0-.179-.483m.53 2.507a7 7 0 0 0-.1-1.025l.985-.17q.1.58.116 1.17zm-.131 1.538q.05-.254.081-.51l.993.123a8 8 0 0 1-.23 1.155l-.964-.267q.069-.247.12-.501m-.952 2.379q.276-.436.486-.908l.914.405q-.24.54-.555 1.038zm-.964 1.205q.183-.183.35-.378l.758.653a8 8 0 0 1-.401.432z"/><path d="M8 1a7 7 0 1 0 4.95 11.95l.707.707A8.001 8.001 0 1 1 8 0z"/><path d="M7.5 3a.5.5 0 0 1 .5.5v5.21l3.248 1.856a.5.5 0 0 1-.496.868l-3.5-2A.5.5 0 0 1 7 9V3.5a.5.5 0 0 1 .5-.5"/></svg>
<svg style="position:absolute;left:2640px;top:624px;width:23px;height:23px;" viewBox="0 0 16 16" fill="#dc3545"><path d="M6.5 1h3a.5.5 0 0 1 .5.5v1H6v-1a.5.5 0 0 1 .5-.5M11 2.5v-1A1.5 1.5 0 0 0 9.5 0h-3A1.5 1.5 0 0 0 5 1.5v1H1.5a.5.5 0 0 0 0 1h.538l.853 10.66A2 2 0 0 0 4.885 16h6.23a2 2 0 0 0 1.994-1.84l.853-10.66h.538a.5.5 0 0 0 0-1zm1.958 1-.846 10.58a1 1 0 0 1-.997.92h-6.23a1 1 0 0 1-.997-.92L3.042 3.5zm-7.487 1a.5.5 0 0 1 .528.47l.5 8.5a.5.5 0 0 1-.998.06L5 5.03a.5.5 0 0 1 .47-.53Zm5.058 0a.5.5 0 0 1 .47.53l-.5 8.5a.5.5 0 1 1-.998-.06l.5-8.5a.5.5 0 0 1 .528-.47M8 4.5a.5.5 0 0 1 .5.5v8.5a.5.5 0 0 1-1 0V5a.5.5 0 0 1 .5-.5"/></svg>
<div class="t" style="left:600.00px;top:744.52px;font-size:27.14px;line-height:27.14px;letter-spacing:1.300px;color:#0d6efd;font-weight:700;">RM-002</div>
<div class="t" style="left:857.00px;top:744.52px;font-size:27.14px;line-height:27.14px;letter-spacing:0.050px;color:#212529;font-weight:400;">Aloe Vera Extract</div>
<div class="t" style="left:1246.00px;top:744.52px;font-size:27.14px;line-height:27.14px;letter-spacing:-0.500px;color:#212529;font-weight:400;">KG</div>
<div class="t" style="left:1419.00px;top:744.52px;font-size:27.14px;line-height:27.14px;letter-spacing:-0.300px;color:#212529;font-weight:400;">50.00 KG</div>
<div class="t" style="left:1779.00px;top:744.52px;font-size:27.14px;line-height:27.14px;letter-spacing:0.100px;color:#198754;font-weight:700;">15,976.00 KG</div>
<div style="position:absolute;left:2156px;top:737.0px;width:141px;height:42px;border-radius:14px;background:#e8f5ef"></div>
<svg style="position:absolute;left:2176px;top:747px;width:22px;height:22px;" viewBox="0 0 16 16" fill="#198754"><path d="M8 15A7 7 0 1 1 8 1a7 7 0 0 1 0 14m0 1A8 8 0 1 0 8 0a8 8 0 0 0 0 16"/><path d="m10.97 4.97-.02.022-3.473 4.425-2.093-2.094a.75.75 0 0 0-1.06 1.06L6.97 11.03a.75.75 0 0 0 1.079-.02l3.992-4.99a.75.75 0 0 0-1.071-1.05"/></svg>
<div class="t" style="left:2208.15px;top:746.84px;font-size:22.93px;line-height:22.93px;letter-spacing:1.046px;color:#198754;font-weight:400;-webkit-text-stroke:1.1px #198754;">Active</div>
<div style="position:absolute;left:2446px;top:724.0px;width:80px;height:60px;border:4px solid #4f46e5;border-radius:16px 0 0 16px"></div>
<svg style="position:absolute;left:2478px;top:745px;width:24px;height:24px;" viewBox="0 0 16 16" fill="#4f46e5"><path d="M12.146.146a.5.5 0 0 1 .708 0l3 3a.5.5 0 0 1 0 .708l-10 10a.5.5 0 0 1-.168.11l-5 2a.5.5 0 0 1-.65-.65l2-5a.5.5 0 0 1 .11-.168zM11.207 2.5 13.5 4.793 14.793 3.5 12.5 1.207zm1.586 3L10.5 3.207 4 9.707V10h.5a.5.5 0 0 1 .5.5v.5h.5a.5.5 0 0 1 .5.5v.5h.293zm-9.761 5.175-.106.106-1.528 3.821 3.821-1.528.106-.106A.5.5 0 0 1 5 12.5V12h-.5a.5.5 0 0 1-.5-.5V11h-.5a.5.5 0 0 1-.468-.325"/></svg>
<svg style="position:absolute;left:2560px;top:746px;width:24px;height:24px;opacity:0.8;" viewBox="0 0 16 16" fill="#0dcaf0"><path d="M8.515 1.019A7 7 0 0 0 8 1V0a8 8 0 0 1 .589.022zm2.004.45a7 7 0 0 0-.985-.299l.219-.976q.576.129 1.126.342zm1.37.71a7 7 0 0 0-.439-.27l.493-.87a8 8 0 0 1 .979.654l-.615.789a7 7 0 0 0-.418-.302zm1.834 1.79a7 7 0 0 0-.653-.796l.724-.69q.406.429.747.91zm.744 1.352a7 7 0 0 0-.214-.468l.893-.45a8 8 0 0 1 .45 1.088l-.95.313a7 7 0 0 0-.179-.483m.53 2.507a7 7 0 0 0-.1-1.025l.985-.17q.1.58.116 1.17zm-.131 1.538q.05-.254.081-.51l.993.123a8 8 0 0 1-.23 1.155l-.964-.267q.069-.247.12-.501m-.952 2.379q.276-.436.486-.908l.914.405q-.24.54-.555 1.038zm-.964 1.205q.183-.183.35-.378l.758.653a8 8 0 0 1-.401.432z"/><path d="M8 1a7 7 0 1 0 4.95 11.95l.707.707A8.001 8.001 0 1 1 8 0z"/><path d="M7.5 3a.5.5 0 0 1 .5.5v5.21l3.248 1.856a.5.5 0 0 1-.496.868l-3.5-2A.5.5 0 0 1 7 9V3.5a.5.5 0 0 1 .5-.5"/></svg>
<svg style="position:absolute;left:2640px;top:741px;width:23px;height:23px;" viewBox="0 0 16 16" fill="#dc3545"><path d="M6.5 1h3a.5.5 0 0 1 .5.5v1H6v-1a.5.5 0 0 1 .5-.5M11 2.5v-1A1.5 1.5 0 0 0 9.5 0h-3A1.5 1.5 0 0 0 5 1.5v1H1.5a.5.5 0 0 0 0 1h.538l.853 10.66A2 2 0 0 0 4.885 16h6.23a2 2 0 0 0 1.994-1.84l.853-10.66h.538a.5.5 0 0 0 0-1zm1.958 1-.846 10.58a1 1 0 0 1-.997.92h-6.23a1 1 0 0 1-.997-.92L3.042 3.5zm-7.487 1a.5.5 0 0 1 .528.47l.5 8.5a.5.5 0 0 1-.998.06L5 5.03a.5.5 0 0 1 .47-.53Zm5.058 0a.5.5 0 0 1 .47.53l-.5 8.5a.5.5 0 1 1-.998-.06l.5-8.5a.5.5 0 0 1 .528-.47M8 4.5a.5.5 0 0 1 .5.5v8.5a.5.5 0 0 1-1 0V5a.5.5 0 0 1 .5-.5"/></svg>
<div class="t" style="left:600.00px;top:862.92px;font-size:27.14px;line-height:27.14px;letter-spacing:1.300px;color:#0d6efd;font-weight:700;">RM-003</div>
<div class="t" style="left:857.00px;top:862.92px;font-size:27.14px;line-height:27.14px;letter-spacing:0.050px;color:#212529;font-weight:400;">Vitamin E</div>
<div class="t" style="left:1246.00px;top:862.92px;font-size:27.14px;line-height:27.14px;letter-spacing:-0.500px;color:#212529;font-weight:400;">KG</div>
<div class="t" style="left:1419.00px;top:862.92px;font-size:27.14px;line-height:27.14px;letter-spacing:-0.300px;color:#212529;font-weight:400;">25.00 KG</div>
<div class="t" style="left:1779.00px;top:862.92px;font-size:27.14px;line-height:27.14px;letter-spacing:0.100px;color:#198754;font-weight:700;">15,539.00 KG</div>
<div style="position:absolute;left:2156px;top:855.4px;width:141px;height:42px;border-radius:14px;background:#e8f5ef"></div>
<svg style="position:absolute;left:2176px;top:865.4px;width:22px;height:22px;" viewBox="0 0 16 16" fill="#198754"><path d="M8 15A7 7 0 1 1 8 1a7 7 0 0 1 0 14m0 1A8 8 0 1 0 8 0a8 8 0 0 0 0 16"/><path d="m10.97 4.97-.02.022-3.473 4.425-2.093-2.094a.75.75 0 0 0-1.06 1.06L6.97 11.03a.75.75 0 0 0 1.079-.02l3.992-4.99a.75.75 0 0 0-1.071-1.05"/></svg>
<div class="t" style="left:2208.15px;top:865.24px;font-size:22.93px;line-height:22.93px;letter-spacing:1.046px;color:#198754;font-weight:400;-webkit-text-stroke:1.1px #198754;">Active</div>
<div style="position:absolute;left:2446px;top:842.4px;width:80px;height:60px;border:4px solid #4f46e5;border-radius:16px 0 0 16px"></div>
<svg style="position:absolute;left:2478px;top:863.4px;width:24px;height:24px;" viewBox="0 0 16 16" fill="#4f46e5"><path d="M12.146.146a.5.5 0 0 1 .708 0l3 3a.5.5 0 0 1 0 .708l-10 10a.5.5 0 0 1-.168.11l-5 2a.5.5 0 0 1-.65-.65l2-5a.5.5 0 0 1 .11-.168zM11.207 2.5 13.5 4.793 14.793 3.5 12.5 1.207zm1.586 3L10.5 3.207 4 9.707V10h.5a.5.5 0 0 1 .5.5v.5h.5a.5.5 0 0 1 .5.5v.5h.293zm-9.761 5.175-.106.106-1.528 3.821 3.821-1.528.106-.106A.5.5 0 0 1 5 12.5V12h-.5a.5.5 0 0 1-.5-.5V11h-.5a.5.5 0 0 1-.468-.325"/></svg>
<svg style="position:absolute;left:2560px;top:864.4px;width:24px;height:24px;opacity:0.8;" viewBox="0 0 16 16" fill="#0dcaf0"><path d="M8.515 1.019A7 7 0 0 0 8 1V0a8 8 0 0 1 .589.022zm2.004.45a7 7 0 0 0-.985-.299l.219-.976q.576.129 1.126.342zm1.37.71a7 7 0 0 0-.439-.27l.493-.87a8 8 0 0 1 .979.654l-.615.789a7 7 0 0 0-.418-.302zm1.834 1.79a7 7 0 0 0-.653-.796l.724-.69q.406.429.747.91zm.744 1.352a7 7 0 0 0-.214-.468l.893-.45a8 8 0 0 1 .45 1.088l-.95.313a7 7 0 0 0-.179-.483m.53 2.507a7 7 0 0 0-.1-1.025l.985-.17q.1.58.116 1.17zm-.131 1.538q.05-.254.081-.51l.993.123a8 8 0 0 1-.23 1.155l-.964-.267q.069-.247.12-.501m-.952 2.379q.276-.436.486-.908l.914.405q-.24.54-.555 1.038zm-.964 1.205q.183-.183.35-.378l.758.653a8 8 0 0 1-.401.432z"/><path d="M8 1a7 7 0 1 0 4.95 11.95l.707.707A8.001 8.001 0 1 1 8 0z"/><path d="M7.5 3a.5.5 0 0 1 .5.5v5.21l3.248 1.856a.5.5 0 0 1-.496.868l-3.5-2A.5.5 0 0 1 7 9V3.5a.5.5 0 0 1 .5-.5"/></svg>
<svg style="position:absolute;left:2640px;top:859.4px;width:23px;height:23px;" viewBox="0 0 16 16" fill="#dc3545"><path d="M6.5 1h3a.5.5 0 0 1 .5.5v1H6v-1a.5.5 0 0 1 .5-.5M11 2.5v-1A1.5 1.5 0 0 0 9.5 0h-3A1.5 1.5 0 0 0 5 1.5v1H1.5a.5.5 0 0 0 0 1h.538l.853 10.66A2 2 0 0 0 4.885 16h6.23a2 2 0 0 0 1.994-1.84l.853-10.66h.538a.5.5 0 0 0 0-1zm1.958 1-.846 10.58a1 1 0 0 1-.997.92h-6.23a1 1 0 0 1-.997-.92L3.042 3.5zm-7.487 1a.5.5 0 0 1 .528.47l.5 8.5a.5.5 0 0 1-.998.06L5 5.03a.5.5 0 0 1 .47-.53Zm5.058 0a.5.5 0 0 1 .47.53l-.5 8.5a.5.5 0 1 1-.998-.06l.5-8.5a.5.5 0 0 1 .528-.47M8 4.5a.5.5 0 0 1 .5.5v8.5a.5.5 0 0 1-1 0V5a.5.5 0 0 1 .5-.5"/></svg>
<div class="t" style="left:600.00px;top:980.72px;font-size:27.14px;line-height:27.14px;letter-spacing:1.300px;color:#0d6efd;font-weight:700;">RM-004</div>
<div class="t" style="left:855.00px;top:980.72px;font-size:27.14px;line-height:27.14px;letter-spacing:0.050px;color:#212529;font-weight:400;">Fragrance Oil</div>
<div class="t" style="left:1246.00px;top:980.72px;font-size:27.14px;line-height:27.14px;letter-spacing:-0.500px;color:#212529;font-weight:400;">LTR</div>
<div class="t" style="left:1419.00px;top:980.72px;font-size:27.14px;line-height:27.14px;letter-spacing:-0.300px;color:#212529;font-weight:400;">20.00 LTR</div>
<div class="t" style="left:1779.00px;top:980.72px;font-size:27.14px;line-height:27.14px;letter-spacing:0.100px;color:#198754;font-weight:700;">16,995.00 LTR</div>
<div style="position:absolute;left:2156px;top:973.2px;width:141px;height:42px;border-radius:14px;background:#e8f5ef"></div>
<svg style="position:absolute;left:2176px;top:983.2px;width:22px;height:22px;" viewBox="0 0 16 16" fill="#198754"><path d="M8 15A7 7 0 1 1 8 1a7 7 0 0 1 0 14m0 1A8 8 0 1 0 8 0a8 8 0 0 0 0 16"/><path d="m10.97 4.97-.02.022-3.473 4.425-2.093-2.094a.75.75 0 0 0-1.06 1.06L6.97 11.03a.75.75 0 0 0 1.079-.02l3.992-4.99a.75.75 0 0 0-1.071-1.05"/></svg>
<div class="t" style="left:2208.15px;top:983.04px;font-size:22.93px;line-height:22.93px;letter-spacing:1.046px;color:#198754;font-weight:400;-webkit-text-stroke:1.1px #198754;">Active</div>
<div style="position:absolute;left:2446px;top:960.2px;width:80px;height:60px;border:4px solid #4f46e5;border-radius:16px 0 0 16px"></div>
<svg style="position:absolute;left:2478px;top:981.2px;width:24px;height:24px;" viewBox="0 0 16 16" fill="#4f46e5"><path d="M12.146.146a.5.5 0 0 1 .708 0l3 3a.5.5 0 0 1 0 .708l-10 10a.5.5 0 0 1-.168.11l-5 2a.5.5 0 0 1-.65-.65l2-5a.5.5 0 0 1 .11-.168zM11.207 2.5 13.5 4.793 14.793 3.5 12.5 1.207zm1.586 3L10.5 3.207 4 9.707V10h.5a.5.5 0 0 1 .5.5v.5h.5a.5.5 0 0 1 .5.5v.5h.293zm-9.761 5.175-.106.106-1.528 3.821 3.821-1.528.106-.106A.5.5 0 0 1 5 12.5V12h-.5a.5.5 0 0 1-.5-.5V11h-.5a.5.5 0 0 1-.468-.325"/></svg>
<svg style="position:absolute;left:2560px;top:982.2px;width:24px;height:24px;opacity:0.8;" viewBox="0 0 16 16" fill="#0dcaf0"><path d="M8.515 1.019A7 7 0 0 0 8 1V0a8 8 0 0 1 .589.022zm2.004.45a7 7 0 0 0-.985-.299l.219-.976q.576.129 1.126.342zm1.37.71a7 7 0 0 0-.439-.27l.493-.87a8 8 0 0 1 .979.654l-.615.789a7 7 0 0 0-.418-.302zm1.834 1.79a7 7 0 0 0-.653-.796l.724-.69q.406.429.747.91zm.744 1.352a7 7 0 0 0-.214-.468l.893-.45a8 8 0 0 1 .45 1.088l-.95.313a7 7 0 0 0-.179-.483m.53 2.507a7 7 0 0 0-.1-1.025l.985-.17q.1.58.116 1.17zm-.131 1.538q.05-.254.081-.51l.993.123a8 8 0 0 1-.23 1.155l-.964-.267q.069-.247.12-.501m-.952 2.379q.276-.436.486-.908l.914.405q-.24.54-.555 1.038zm-.964 1.205q.183-.183.35-.378l.758.653a8 8 0 0 1-.401.432z"/><path d="M8 1a7 7 0 1 0 4.95 11.95l.707.707A8.001 8.001 0 1 1 8 0z"/><path d="M7.5 3a.5.5 0 0 1 .5.5v5.21l3.248 1.856a.5.5 0 0 1-.496.868l-3.5-2A.5.5 0 0 1 7 9V3.5a.5.5 0 0 1 .5-.5"/></svg>
<svg style="position:absolute;left:2640px;top:977.2px;width:23px;height:23px;" viewBox="0 0 16 16" fill="#dc3545"><path d="M6.5 1h3a.5.5 0 0 1 .5.5v1H6v-1a.5.5 0 0 1 .5-.5M11 2.5v-1A1.5 1.5 0 0 0 9.5 0h-3A1.5 1.5 0 0 0 5 1.5v1H1.5a.5.5 0 0 0 0 1h.538l.853 10.66A2 2 0 0 0 4.885 16h6.23a2 2 0 0 0 1.994-1.84l.853-10.66h.538a.5.5 0 0 0 0-1zm1.958 1-.846 10.58a1 1 0 0 1-.997.92h-6.23a1 1 0 0 1-.997-.92L3.042 3.5zm-7.487 1a.5.5 0 0 1 .528.47l.5 8.5a.5.5 0 0 1-.998.06L5 5.03a.5.5 0 0 1 .47-.53Zm5.058 0a.5.5 0 0 1 .47.53l-.5 8.5a.5.5 0 1 1-.998-.06l.5-8.5a.5.5 0 0 1 .528-.47M8 4.5a.5.5 0 0 1 .5.5v8.5a.5.5 0 0 1-1 0V5a.5.5 0 0 1 .5-.5"/></svg>
<div class="t" style="left:600.00px;top:1098.92px;font-size:27.14px;line-height:27.14px;letter-spacing:1.300px;color:#0d6efd;font-weight:700;">RM-005</div>
<div class="t" style="left:856.00px;top:1098.92px;font-size:27.14px;line-height:27.14px;letter-spacing:0.050px;color:#212529;font-weight:400;">Shea Butter</div>
<div class="t" style="left:1246.00px;top:1098.92px;font-size:27.14px;line-height:27.14px;letter-spacing:-0.500px;color:#212529;font-weight:400;">KG</div>
<div class="t" style="left:1420.00px;top:1098.92px;font-size:27.14px;line-height:27.14px;letter-spacing:-0.300px;color:#212529;font-weight:400;">40.00 KG</div>
<div class="t" style="left:1779.00px;top:1098.92px;font-size:27.14px;line-height:27.14px;letter-spacing:0.100px;color:#198754;font-weight:700;">12,422.00 KG</div>
<div style="position:absolute;left:2156px;top:1091.4px;width:141px;height:42px;border-radius:14px;background:#e8f5ef"></div>
<svg style="position:absolute;left:2176px;top:1101.4px;width:22px;height:22px;" viewBox="0 0 16 16" fill="#198754"><path d="M8 15A7 7 0 1 1 8 1a7 7 0 0 1 0 14m0 1A8 8 0 1 0 8 0a8 8 0 0 0 0 16"/><path d="m10.97 4.97-.02.022-3.473 4.425-2.093-2.094a.75.75 0 0 0-1.06 1.06L6.97 11.03a.75.75 0 0 0 1.079-.02l3.992-4.99a.75.75 0 0 0-1.071-1.05"/></svg>
<div class="t" style="left:2208.15px;top:1101.24px;font-size:22.93px;line-height:22.93px;letter-spacing:1.046px;color:#198754;font-weight:400;-webkit-text-stroke:1.1px #198754;">Active</div>
<div style="position:absolute;left:2446px;top:1078.4px;width:80px;height:60px;border:4px solid #4f46e5;border-radius:16px 0 0 16px"></div>
<svg style="position:absolute;left:2478px;top:1099.4px;width:24px;height:24px;" viewBox="0 0 16 16" fill="#4f46e5"><path d="M12.146.146a.5.5 0 0 1 .708 0l3 3a.5.5 0 0 1 0 .708l-10 10a.5.5 0 0 1-.168.11l-5 2a.5.5 0 0 1-.65-.65l2-5a.5.5 0 0 1 .11-.168zM11.207 2.5 13.5 4.793 14.793 3.5 12.5 1.207zm1.586 3L10.5 3.207 4 9.707V10h.5a.5.5 0 0 1 .5.5v.5h.5a.5.5 0 0 1 .5.5v.5h.293zm-9.761 5.175-.106.106-1.528 3.821 3.821-1.528.106-.106A.5.5 0 0 1 5 12.5V12h-.5a.5.5 0 0 1-.5-.5V11h-.5a.5.5 0 0 1-.468-.325"/></svg>
<svg style="position:absolute;left:2560px;top:1100.4px;width:24px;height:24px;opacity:0.8;" viewBox="0 0 16 16" fill="#0dcaf0"><path d="M8.515 1.019A7 7 0 0 0 8 1V0a8 8 0 0 1 .589.022zm2.004.45a7 7 0 0 0-.985-.299l.219-.976q.576.129 1.126.342zm1.37.71a7 7 0 0 0-.439-.27l.493-.87a8 8 0 0 1 .979.654l-.615.789a7 7 0 0 0-.418-.302zm1.834 1.79a7 7 0 0 0-.653-.796l.724-.69q.406.429.747.91zm.744 1.352a7 7 0 0 0-.214-.468l.893-.45a8 8 0 0 1 .45 1.088l-.95.313a7 7 0 0 0-.179-.483m.53 2.507a7 7 0 0 0-.1-1.025l.985-.17q.1.58.116 1.17zm-.131 1.538q.05-.254.081-.51l.993.123a8 8 0 0 1-.23 1.155l-.964-.267q.069-.247.12-.501m-.952 2.379q.276-.436.486-.908l.914.405q-.24.54-.555 1.038zm-.964 1.205q.183-.183.35-.378l.758.653a8 8 0 0 1-.401.432z"/><path d="M8 1a7 7 0 1 0 4.95 11.95l.707.707A8.001 8.001 0 1 1 8 0z"/><path d="M7.5 3a.5.5 0 0 1 .5.5v5.21l3.248 1.856a.5.5 0 0 1-.496.868l-3.5-2A.5.5 0 0 1 7 9V3.5a.5.5 0 0 1 .5-.5"/></svg>
<svg style="position:absolute;left:2640px;top:1095.4px;width:23px;height:23px;" viewBox="0 0 16 16" fill="#dc3545"><path d="M6.5 1h3a.5.5 0 0 1 .5.5v1H6v-1a.5.5 0 0 1 .5-.5M11 2.5v-1A1.5 1.5 0 0 0 9.5 0h-3A1.5 1.5 0 0 0 5 1.5v1H1.5a.5.5 0 0 0 0 1h.538l.853 10.66A2 2 0 0 0 4.885 16h6.23a2 2 0 0 0 1.994-1.84l.853-10.66h.538a.5.5 0 0 0 0-1zm1.958 1-.846 10.58a1 1 0 0 1-.997.92h-6.23a1 1 0 0 1-.997-.92L3.042 3.5zm-7.487 1a.5.5 0 0 1 .528.47l.5 8.5a.5.5 0 0 1-.998.06L5 5.03a.5.5 0 0 1 .47-.53Zm5.058 0a.5.5 0 0 1 .47.53l-.5 8.5a.5.5 0 1 1-.998-.06l.5-8.5a.5.5 0 0 1 .528-.47M8 4.5a.5.5 0 0 1 .5.5v8.5a.5.5 0 0 1-1 0V5a.5.5 0 0 1 .5-.5"/></svg>
<div class="t" style="left:600.00px;top:1217.12px;font-size:27.14px;line-height:27.14px;letter-spacing:1.300px;color:#0d6efd;font-weight:700;">RM-006</div>
<div class="t" style="left:856.00px;top:1217.12px;font-size:27.14px;line-height:27.14px;letter-spacing:0.050px;color:#212529;font-weight:400;">Glycerin</div>
<div class="t" style="left:1246.00px;top:1217.12px;font-size:27.14px;line-height:27.14px;letter-spacing:-0.500px;color:#212529;font-weight:400;">KG</div>
<div class="t" style="left:1419.00px;top:1217.12px;font-size:27.14px;line-height:27.14px;letter-spacing:-0.300px;color:#212529;font-weight:400;">80.00 KG</div>
<div class="t" style="left:1779.00px;top:1217.12px;font-size:27.14px;line-height:27.14px;letter-spacing:0.100px;color:#198754;font-weight:700;">19,133.00 KG</div>
<div style="position:absolute;left:2156px;top:1209.6px;width:141px;height:42px;border-radius:14px;background:#e8f5ef"></div>
<svg style="position:absolute;left:2176px;top:1219.6px;width:22px;height:22px;" viewBox="0 0 16 16" fill="#198754"><path d="M8 15A7 7 0 1 1 8 1a7 7 0 0 1 0 14m0 1A8 8 0 1 0 8 0a8 8 0 0 0 0 16"/><path d="m10.97 4.97-.02.022-3.473 4.425-2.093-2.094a.75.75 0 0 0-1.06 1.06L6.97 11.03a.75.75 0 0 0 1.079-.02l3.992-4.99a.75.75 0 0 0-1.071-1.05"/></svg>
<div class="t" style="left:2208.15px;top:1219.44px;font-size:22.93px;line-height:22.93px;letter-spacing:1.046px;color:#198754;font-weight:400;-webkit-text-stroke:1.1px #198754;">Active</div>
<div style="position:absolute;left:2446px;top:1196.6px;width:80px;height:60px;border:4px solid #4f46e5;border-radius:16px 0 0 16px"></div>
<svg style="position:absolute;left:2478px;top:1217.6px;width:24px;height:24px;" viewBox="0 0 16 16" fill="#4f46e5"><path d="M12.146.146a.5.5 0 0 1 .708 0l3 3a.5.5 0 0 1 0 .708l-10 10a.5.5 0 0 1-.168.11l-5 2a.5.5 0 0 1-.65-.65l2-5a.5.5 0 0 1 .11-.168zM11.207 2.5 13.5 4.793 14.793 3.5 12.5 1.207zm1.586 3L10.5 3.207 4 9.707V10h.5a.5.5 0 0 1 .5.5v.5h.5a.5.5 0 0 1 .5.5v.5h.293zm-9.761 5.175-.106.106-1.528 3.821 3.821-1.528.106-.106A.5.5 0 0 1 5 12.5V12h-.5a.5.5 0 0 1-.5-.5V11h-.5a.5.5 0 0 1-.468-.325"/></svg>
<svg style="position:absolute;left:2560px;top:1218.6px;width:24px;height:24px;opacity:0.8;" viewBox="0 0 16 16" fill="#0dcaf0"><path d="M8.515 1.019A7 7 0 0 0 8 1V0a8 8 0 0 1 .589.022zm2.004.45a7 7 0 0 0-.985-.299l.219-.976q.576.129 1.126.342zm1.37.71a7 7 0 0 0-.439-.27l.493-.87a8 8 0 0 1 .979.654l-.615.789a7 7 0 0 0-.418-.302zm1.834 1.79a7 7 0 0 0-.653-.796l.724-.69q.406.429.747.91zm.744 1.352a7 7 0 0 0-.214-.468l.893-.45a8 8 0 0 1 .45 1.088l-.95.313a7 7 0 0 0-.179-.483m.53 2.507a7 7 0 0 0-.1-1.025l.985-.17q.1.58.116 1.17zm-.131 1.538q.05-.254.081-.51l.993.123a8 8 0 0 1-.23 1.155l-.964-.267q.069-.247.12-.501m-.952 2.379q.276-.436.486-.908l.914.405q-.24.54-.555 1.038zm-.964 1.205q.183-.183.35-.378l.758.653a8 8 0 0 1-.401.432z"/><path d="M8 1a7 7 0 1 0 4.95 11.95l.707.707A8.001 8.001 0 1 1 8 0z"/><path d="M7.5 3a.5.5 0 0 1 .5.5v5.21l3.248 1.856a.5.5 0 0 1-.496.868l-3.5-2A.5.5 0 0 1 7 9V3.5a.5.5 0 0 1 .5-.5"/></svg>
<svg style="position:absolute;left:2640px;top:1213.6px;width:23px;height:23px;" viewBox="0 0 16 16" fill="#dc3545"><path d="M6.5 1h3a.5.5 0 0 1 .5.5v1H6v-1a.5.5 0 0 1 .5-.5M11 2.5v-1A1.5 1.5 0 0 0 9.5 0h-3A1.5 1.5 0 0 0 5 1.5v1H1.5a.5.5 0 0 0 0 1h.538l.853 10.66A2 2 0 0 0 4.885 16h6.23a2 2 0 0 0 1.994-1.84l.853-10.66h.538a.5.5 0 0 0 0-1zm1.958 1-.846 10.58a1 1 0 0 1-.997.92h-6.23a1 1 0 0 1-.997-.92L3.042 3.5zm-7.487 1a.5.5 0 0 1 .528.47l.5 8.5a.5.5 0 0 1-.998.06L5 5.03a.5.5 0 0 1 .47-.53Zm5.058 0a.5.5 0 0 1 .47.53l-.5 8.5a.5.5 0 1 1-.998-.06l.5-8.5a.5.5 0 0 1 .528-.47M8 4.5a.5.5 0 0 1 .5.5v8.5a.5.5 0 0 1-1 0V5a.5.5 0 0 1 .5-.5"/></svg>
<div class="t" style="left:600.00px;top:1335.32px;font-size:27.14px;line-height:27.14px;letter-spacing:1.300px;color:#0d6efd;font-weight:700;">mat 1003</div>
<div class="t" style="left:857.00px;top:1335.32px;font-size:27.14px;line-height:27.14px;letter-spacing:0.050px;color:#212529;font-weight:400;">shampoo materia</div>
<div class="t" style="left:1246.00px;top:1335.32px;font-size:27.14px;line-height:27.14px;letter-spacing:-0.500px;color:#212529;font-weight:400;">KG</div>
<div class="t" style="left:1418.00px;top:1335.32px;font-size:27.14px;line-height:27.14px;letter-spacing:-0.300px;color:#212529;font-weight:400;">100.00 KG</div>
<div class="t" style="left:1779.00px;top:1335.32px;font-size:27.14px;line-height:27.14px;letter-spacing:0.100px;color:#198754;font-weight:700;">100.00 KG</div>
<div style="position:absolute;left:2156px;top:1327.8px;width:141px;height:42px;border-radius:14px;background:#e8f5ef"></div>
<svg style="position:absolute;left:2176px;top:1337.8px;width:22px;height:22px;" viewBox="0 0 16 16" fill="#198754"><path d="M8 15A7 7 0 1 1 8 1a7 7 0 0 1 0 14m0 1A8 8 0 1 0 8 0a8 8 0 0 0 0 16"/><path d="m10.97 4.97-.02.022-3.473 4.425-2.093-2.094a.75.75 0 0 0-1.06 1.06L6.97 11.03a.75.75 0 0 0 1.079-.02l3.992-4.99a.75.75 0 0 0-1.071-1.05"/></svg>
<div class="t" style="left:2208.15px;top:1337.64px;font-size:22.93px;line-height:22.93px;letter-spacing:1.046px;color:#198754;font-weight:400;-webkit-text-stroke:1.1px #198754;">Active</div>
<div style="position:absolute;left:2446px;top:1314.8px;width:80px;height:60px;border:4px solid #4f46e5;border-radius:16px 0 0 16px"></div>
<svg style="position:absolute;left:2478px;top:1335.8px;width:24px;height:24px;" viewBox="0 0 16 16" fill="#4f46e5"><path d="M12.146.146a.5.5 0 0 1 .708 0l3 3a.5.5 0 0 1 0 .708l-10 10a.5.5 0 0 1-.168.11l-5 2a.5.5 0 0 1-.65-.65l2-5a.5.5 0 0 1 .11-.168zM11.207 2.5 13.5 4.793 14.793 3.5 12.5 1.207zm1.586 3L10.5 3.207 4 9.707V10h.5a.5.5 0 0 1 .5.5v.5h.5a.5.5 0 0 1 .5.5v.5h.293zm-9.761 5.175-.106.106-1.528 3.821 3.821-1.528.106-.106A.5.5 0 0 1 5 12.5V12h-.5a.5.5 0 0 1-.5-.5V11h-.5a.5.5 0 0 1-.468-.325"/></svg>
<svg style="position:absolute;left:2560px;top:1336.8px;width:24px;height:24px;opacity:0.8;" viewBox="0 0 16 16" fill="#0dcaf0"><path d="M8.515 1.019A7 7 0 0 0 8 1V0a8 8 0 0 1 .589.022zm2.004.45a7 7 0 0 0-.985-.299l.219-.976q.576.129 1.126.342zm1.37.71a7 7 0 0 0-.439-.27l.493-.87a8 8 0 0 1 .979.654l-.615.789a7 7 0 0 0-.418-.302zm1.834 1.79a7 7 0 0 0-.653-.796l.724-.69q.406.429.747.91zm.744 1.352a7 7 0 0 0-.214-.468l.893-.45a8 8 0 0 1 .45 1.088l-.95.313a7 7 0 0 0-.179-.483m.53 2.507a7 7 0 0 0-.1-1.025l.985-.17q.1.58.116 1.17zm-.131 1.538q.05-.254.081-.51l.993.123a8 8 0 0 1-.23 1.155l-.964-.267q.069-.247.12-.501m-.952 2.379q.276-.436.486-.908l.914.405q-.24.54-.555 1.038zm-.964 1.205q.183-.183.35-.378l.758.653a8 8 0 0 1-.401.432z"/><path d="M8 1a7 7 0 1 0 4.95 11.95l.707.707A8.001 8.001 0 1 1 8 0z"/><path d="M7.5 3a.5.5 0 0 1 .5.5v5.21l3.248 1.856a.5.5 0 0 1-.496.868l-3.5-2A.5.5 0 0 1 7 9V3.5a.5.5 0 0 1 .5-.5"/></svg>
<svg style="position:absolute;left:2640px;top:1331.8px;width:23px;height:23px;" viewBox="0 0 16 16" fill="#dc3545"><path d="M6.5 1h3a.5.5 0 0 1 .5.5v1H6v-1a.5.5 0 0 1 .5-.5M11 2.5v-1A1.5 1.5 0 0 0 9.5 0h-3A1.5 1.5 0 0 0 5 1.5v1H1.5a.5.5 0 0 0 0 1h.538l.853 10.66A2 2 0 0 0 4.885 16h6.23a2 2 0 0 0 1.994-1.84l.853-10.66h.538a.5.5 0 0 0 0-1zm1.958 1-.846 10.58a1 1 0 0 1-.997.92h-6.23a1 1 0 0 1-.997-.92L3.042 3.5zm-7.487 1a.5.5 0 0 1 .528.47l.5 8.5a.5.5 0 0 1-.998.06L5 5.03a.5.5 0 0 1 .47-.53Zm5.058 0a.5.5 0 0 1 .47.53l-.5 8.5a.5.5 0 1 1-.998-.06l.5-8.5a.5.5 0 0 1 .528-.47M8 4.5a.5.5 0 0 1 .5.5v8.5a.5.5 0 0 1-1 0V5a.5.5 0 0 1 .5-.5"/></svg>
<div class="t" style="left:600.00px;top:1460.02px;font-size:27.14px;line-height:27.14px;letter-spacing:1.300px;color:#0d6efd;font-weight:700;">Rm2</div>
<div class="t" style="left:855.00px;top:1460.02px;font-size:27.14px;line-height:27.14px;letter-spacing:0.050px;color:#212529;font-weight:400;">Rm-Material-1</div>
<div class="t" style="left:1246.00px;top:1460.02px;font-size:27.14px;line-height:27.14px;letter-spacing:-0.500px;color:#212529;font-weight:400;">KG</div>
<div class="t" style="left:1418.00px;top:1460.02px;font-size:27.14px;line-height:27.14px;letter-spacing:-0.300px;color:#212529;font-weight:400;">100.00 KG</div>
<div class="t" style="left:1779.00px;top:1439.02px;font-size:27.14px;line-height:27.14px;letter-spacing:-0.200px;color:#dc3545;font-weight:700;">0.00 KG</div>
<div style="position:absolute;left:1779px;top:1472px;width:155px;height:42px;border-radius:14px;background:#fdecee"></div>
<div class="t" style="left:1799.05px;top:1482.26px;font-size:22.14px;line-height:22.14px;letter-spacing:1.237px;color:#dc3545;font-weight:400;-webkit-text-stroke:1.1px #dc3545;">Low Stock</div>
<div style="position:absolute;left:2156px;top:1452.5px;width:141px;height:42px;border-radius:14px;background:#e8f5ef"></div>
<svg style="position:absolute;left:2176px;top:1462.5px;width:22px;height:22px;" viewBox="0 0 16 16" fill="#198754"><path d="M8 15A7 7 0 1 1 8 1a7 7 0 0 1 0 14m0 1A8 8 0 1 0 8 0a8 8 0 0 0 0 16"/><path d="m10.97 4.97-.02.022-3.473 4.425-2.093-2.094a.75.75 0 0 0-1.06 1.06L6.97 11.03a.75.75 0 0 0 1.079-.02l3.992-4.99a.75.75 0 0 0-1.071-1.05"/></svg>
<div class="t" style="left:2208.15px;top:1462.34px;font-size:22.93px;line-height:22.93px;letter-spacing:1.046px;color:#198754;font-weight:400;-webkit-text-stroke:1.1px #198754;">Active</div>
<div style="position:absolute;left:2446px;top:1439.5px;width:80px;height:60px;border:4px solid #4f46e5;border-radius:16px 0 0 16px"></div>
<svg style="position:absolute;left:2478px;top:1460.5px;width:24px;height:24px;" viewBox="0 0 16 16" fill="#4f46e5"><path d="M12.146.146a.5.5 0 0 1 .708 0l3 3a.5.5 0 0 1 0 .708l-10 10a.5.5 0 0 1-.168.11l-5 2a.5.5 0 0 1-.65-.65l2-5a.5.5 0 0 1 .11-.168zM11.207 2.5 13.5 4.793 14.793 3.5 12.5 1.207zm1.586 3L10.5 3.207 4 9.707V10h.5a.5.5 0 0 1 .5.5v.5h.5a.5.5 0 0 1 .5.5v.5h.293zm-9.761 5.175-.106.106-1.528 3.821 3.821-1.528.106-.106A.5.5 0 0 1 5 12.5V12h-.5a.5.5 0 0 1-.5-.5V11h-.5a.5.5 0 0 1-.468-.325"/></svg>
<svg style="position:absolute;left:2560px;top:1461.5px;width:24px;height:24px;opacity:0.8;" viewBox="0 0 16 16" fill="#0dcaf0"><path d="M8.515 1.019A7 7 0 0 0 8 1V0a8 8 0 0 1 .589.022zm2.004.45a7 7 0 0 0-.985-.299l.219-.976q.576.129 1.126.342zm1.37.71a7 7 0 0 0-.439-.27l.493-.87a8 8 0 0 1 .979.654l-.615.789a7 7 0 0 0-.418-.302zm1.834 1.79a7 7 0 0 0-.653-.796l.724-.69q.406.429.747.91zm.744 1.352a7 7 0 0 0-.214-.468l.893-.45a8 8 0 0 1 .45 1.088l-.95.313a7 7 0 0 0-.179-.483m.53 2.507a7 7 0 0 0-.1-1.025l.985-.17q.1.58.116 1.17zm-.131 1.538q.05-.254.081-.51l.993.123a8 8 0 0 1-.23 1.155l-.964-.267q.069-.247.12-.501m-.952 2.379q.276-.436.486-.908l.914.405q-.24.54-.555 1.038zm-.964 1.205q.183-.183.35-.378l.758.653a8 8 0 0 1-.401.432z"/><path d="M8 1a7 7 0 1 0 4.95 11.95l.707.707A8.001 8.001 0 1 1 8 0z"/><path d="M7.5 3a.5.5 0 0 1 .5.5v5.21l3.248 1.856a.5.5 0 0 1-.496.868l-3.5-2A.5.5 0 0 1 7 9V3.5a.5.5 0 0 1 .5-.5"/></svg>
<svg style="position:absolute;left:2640px;top:1456.5px;width:23px;height:23px;" viewBox="0 0 16 16" fill="#dc3545"><path d="M6.5 1h3a.5.5 0 0 1 .5.5v1H6v-1a.5.5 0 0 1 .5-.5M11 2.5v-1A1.5 1.5 0 0 0 9.5 0h-3A1.5 1.5 0 0 0 5 1.5v1H1.5a.5.5 0 0 0 0 1h.538l.853 10.66A2 2 0 0 0 4.885 16h6.23a2 2 0 0 0 1.994-1.84l.853-10.66h.538a.5.5 0 0 0 0-1zm1.958 1-.846 10.58a1 1 0 0 1-.997.92h-6.23a1 1 0 0 1-.997-.92L3.042 3.5zm-7.487 1a.5.5 0 0 1 .528.47l.5 8.5a.5.5 0 0 1-.998.06L5 5.03a.5.5 0 0 1 .47-.53Zm5.058 0a.5.5 0 0 1 .47.53l-.5 8.5a.5.5 0 1 1-.998-.06l.5-8.5a.5.5 0 0 1 .528-.47M8 4.5a.5.5 0 0 1 .5.5v8.5a.5.5 0 0 1-1 0V5a.5.5 0 0 1 .5-.5"/></svg>
<div class="t" style="left:600.00px;top:1584.52px;font-size:27.14px;line-height:27.14px;letter-spacing:1.300px;color:#0d6efd;font-weight:700;">Rm-1001</div>
<div class="t" style="left:857.00px;top:1584.52px;font-size:27.14px;line-height:27.14px;letter-spacing:0.050px;color:#212529;font-weight:400;">Aqa</div>
<div class="t" style="left:1246.00px;top:1584.52px;font-size:27.14px;line-height:27.14px;letter-spacing:-0.500px;color:#212529;font-weight:400;">L</div>
<div class="t" style="left:1418.00px;top:1584.52px;font-size:27.14px;line-height:27.14px;letter-spacing:-0.300px;color:#212529;font-weight:400;">100.00 L</div>
<div class="t" style="left:1779.00px;top:1584.52px;font-size:27.14px;line-height:27.14px;letter-spacing:0.100px;color:#198754;font-weight:700;">100.00 L</div>
<div style="position:absolute;left:2156px;top:1577.0px;width:141px;height:42px;border-radius:14px;background:#e8f5ef"></div>
<svg style="position:absolute;left:2176px;top:1587px;width:22px;height:22px;" viewBox="0 0 16 16" fill="#198754"><path d="M8 15A7 7 0 1 1 8 1a7 7 0 0 1 0 14m0 1A8 8 0 1 0 8 0a8 8 0 0 0 0 16"/><path d="m10.97 4.97-.02.022-3.473 4.425-2.093-2.094a.75.75 0 0 0-1.06 1.06L6.97 11.03a.75.75 0 0 0 1.079-.02l3.992-4.99a.75.75 0 0 0-1.071-1.05"/></svg>
<div class="t" style="left:2208.15px;top:1586.84px;font-size:22.93px;line-height:22.93px;letter-spacing:1.046px;color:#198754;font-weight:400;-webkit-text-stroke:1.1px #198754;">Active</div>
<div style="position:absolute;left:2446px;top:1564.0px;width:80px;height:60px;border:4px solid #4f46e5;border-radius:16px 0 0 16px"></div>
<svg style="position:absolute;left:2478px;top:1585px;width:24px;height:24px;" viewBox="0 0 16 16" fill="#4f46e5"><path d="M12.146.146a.5.5 0 0 1 .708 0l3 3a.5.5 0 0 1 0 .708l-10 10a.5.5 0 0 1-.168.11l-5 2a.5.5 0 0 1-.65-.65l2-5a.5.5 0 0 1 .11-.168zM11.207 2.5 13.5 4.793 14.793 3.5 12.5 1.207zm1.586 3L10.5 3.207 4 9.707V10h.5a.5.5 0 0 1 .5.5v.5h.5a.5.5 0 0 1 .5.5v.5h.293zm-9.761 5.175-.106.106-1.528 3.821 3.821-1.528.106-.106A.5.5 0 0 1 5 12.5V12h-.5a.5.5 0 0 1-.5-.5V11h-.5a.5.5 0 0 1-.468-.325"/></svg>
<svg style="position:absolute;left:2560px;top:1586px;width:24px;height:24px;opacity:0.8;" viewBox="0 0 16 16" fill="#0dcaf0"><path d="M8.515 1.019A7 7 0 0 0 8 1V0a8 8 0 0 1 .589.022zm2.004.45a7 7 0 0 0-.985-.299l.219-.976q.576.129 1.126.342zm1.37.71a7 7 0 0 0-.439-.27l.493-.87a8 8 0 0 1 .979.654l-.615.789a7 7 0 0 0-.418-.302zm1.834 1.79a7 7 0 0 0-.653-.796l.724-.69q.406.429.747.91zm.744 1.352a7 7 0 0 0-.214-.468l.893-.45a8 8 0 0 1 .45 1.088l-.95.313a7 7 0 0 0-.179-.483m.53 2.507a7 7 0 0 0-.1-1.025l.985-.17q.1.58.116 1.17zm-.131 1.538q.05-.254.081-.51l.993.123a8 8 0 0 1-.23 1.155l-.964-.267q.069-.247.12-.501m-.952 2.379q.276-.436.486-.908l.914.405q-.24.54-.555 1.038zm-.964 1.205q.183-.183.35-.378l.758.653a8 8 0 0 1-.401.432z"/><path d="M8 1a7 7 0 1 0 4.95 11.95l.707.707A8.001 8.001 0 1 1 8 0z"/><path d="M7.5 3a.5.5 0 0 1 .5.5v5.21l3.248 1.856a.5.5 0 0 1-.496.868l-3.5-2A.5.5 0 0 1 7 9V3.5a.5.5 0 0 1 .5-.5"/></svg>
<svg style="position:absolute;left:2640px;top:1581px;width:23px;height:23px;" viewBox="0 0 16 16" fill="#dc3545"><path d="M6.5 1h3a.5.5 0 0 1 .5.5v1H6v-1a.5.5 0 0 1 .5-.5M11 2.5v-1A1.5 1.5 0 0 0 9.5 0h-3A1.5 1.5 0 0 0 5 1.5v1H1.5a.5.5 0 0 0 0 1h.538l.853 10.66A2 2 0 0 0 4.885 16h6.23a2 2 0 0 0 1.994-1.84l.853-10.66h.538a.5.5 0 0 0 0-1zm1.958 1-.846 10.58a1 1 0 0 1-.997.92h-6.23a1 1 0 0 1-.997-.92L3.042 3.5zm-7.487 1a.5.5 0 0 1 .528.47l.5 8.5a.5.5 0 0 1-.998.06L5 5.03a.5.5 0 0 1 .47-.53Zm5.058 0a.5.5 0 0 1 .47.53l-.5 8.5a.5.5 0 1 1-.998-.06l.5-8.5a.5.5 0 0 1 .528-.47M8 4.5a.5.5 0 0 1 .5.5v8.5a.5.5 0 0 1-1 0V5a.5.5 0 0 1 .5-.5"/></svg>
</body></html>
